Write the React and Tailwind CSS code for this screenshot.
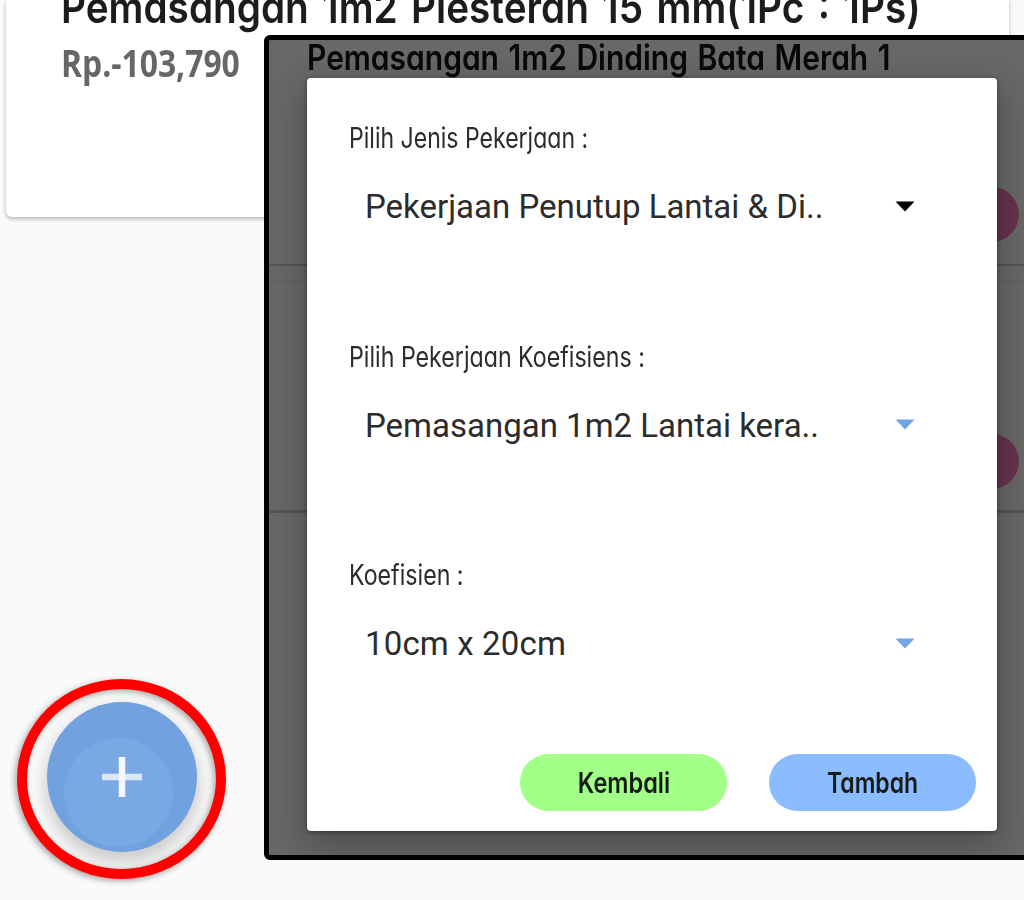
import React from "react";

const rounded = "font-['Inter','Lato',sans-serif] [font-feature-settings:'cv11']";

function Text({ className = "", children }) {
  return (
    <span className={`block w-max origin-left whitespace-nowrap ${className}`}>{children}</span>
  );
}

function Caret({ className }) {
  return (
    <svg className={`-mt-0.5 h-[11px] w-5 ${className}`} viewBox="0 0 20 11" fill="currentColor">
      <path d="M0.5 0.5H19.5L10 10.5Z" />
    </svg>
  );
}

function Field({ label, labelFit, value, valueFit, caret }) {
  return (
    <div className="h-[218.5px]">
      <div className="ml-[42px] flex h-9 items-center">
        <Text className={`${rounded} text-[28px] leading-9 text-[#2c2c2c] ${labelFit}`}>{label}</Text>
      </div>
      <div className="mt-[31px] ml-[58px] flex h-10 w-[550px] items-center justify-between">
        <Text className={`font-['Roboto',sans-serif] text-[33px] leading-10 text-[#2c2c2c] ${valueFit}`}>{value}</Text>
        <Caret className={caret} />
      </div>
    </div>
  );
}

function PillButton({ color, fit, children }) {
  return (
    <button className={`flex h-[57px] w-[207px] items-center justify-center rounded-full ${color}`}>
      <span className={`${rounded} block whitespace-nowrap text-[28px] leading-9 font-semibold text-[#151c18] ${fit}`}>{children}</span>
    </button>
  );
}

function Dialog() {
  return (
    <section className="absolute top-[38px] left-[38px] flex h-[753px] w-[690px] flex-col rounded-[4px] bg-white pt-[42px] shadow-[0_14px_34px_6px_rgba(0,0,0,0.22),0_1px_4px_rgba(0,0,0,0.4)]">
      <Field
        label="Pilih Jenis Pekerjaan :"
        labelFit="scale-x-[0.823]"
        value="Pekerjaan Penutup Lantai & Di.."
        valueFit=""
        caret="text-black"
      />
      <Field
        label="Pilih Pekerjaan Koefisiens :"
        labelFit="scale-x-[0.828]"
        value="Pemasangan 1m2 Lantai kera.."
        valueFit=""
        caret="text-[#72a5e2]"
      />
      <Field
        label="Koefisien :"
        labelFit="scale-x-[0.828]"
        value="10cm x 20cm"
        valueFit="tracking-[0.15px]"
        caret="text-[#72a5e2]"
      />
      <div className="absolute right-[21px] bottom-5 flex gap-[42px]">
        <PillButton color="bg-[#a2ff88]" fit="scale-x-[0.84]">Kembali</PillButton>
        <PillButton color="bg-[#8abcff]" fit="scale-x-[0.82]">Tambah</PillButton>
      </div>
    </section>
  );
}

function DialogScreen() {
  return (
    <div className="absolute top-[35px] left-[264px] h-[825px] w-[780px] overflow-hidden rounded-[6px] border-[5px] border-black bg-[#686868]">
      <div className="h-[227px] border-b-[2px] border-[#575757] pl-[38px]">
        <Text className={`${rounded} -mt-px text-[35px] leading-[36px] font-semibold text-[#080808] [word-spacing:2.3px] scale-x-[0.857]`}>
          Pemasangan 1m2 Dinding Bata Merah 1
        </Text>
      </div>
      <div className="mt-[15px] h-[232px] border-t border-b-[3px] border-t-[#5f5f5f] border-b-[#555]" />
      <div className="absolute top-[147px] left-[695px] size-[55px] rounded-full bg-[#67334d]" />
      <div className="absolute top-[394px] left-[695px] size-[55px] rounded-full bg-[#67334d]" />
      <Dialog />
    </div>
  );
}

function AddButton() {
  return (
    <div className="absolute top-[679px] left-[17px] h-[200px] w-[209px]">
      <button
        aria-label="Tambah"
        className="absolute top-[23px] left-[30px] flex size-[150px] items-center justify-center rounded-full bg-[#71a2df] shadow-[0_8px_16px_3px_rgba(0,0,0,0.18)]"
      >
        <span className="absolute top-[36px] left-[17px] size-[109px] rounded-full bg-[#79a8e4]" />
        <svg className="relative size-10" viewBox="0 0 40 40" stroke="#f4f8fe" strokeWidth="6.5">
          <path d="M20 0V40" />
          <path d="M0 20H40" strokeOpacity="0.8" />
        </svg>
      </button>
      <div className="absolute inset-0 rounded-[50%] border-[10px] border-[#ff0000] drop-shadow-[-2px_2px_3px_rgba(0,0,0,0.35)]" />
    </div>
  );
}

export default function App() {
  return (
    <main className="relative h-[900px] w-full overflow-hidden bg-[#fafafa]">
      <article className="ml-[6px] h-[217px] w-[1003px] rounded-b-[6px] bg-white shadow-[0_2px_4px_rgba(0,0,0,0.28)]">
        <div className="-mt-[19px] inline-block pl-[55px]">
          <Text className={`${rounded} text-[44px] leading-[52px] font-semibold text-[#1c1c1c] [word-spacing:4.2px] scale-x-[0.88]`}>
            Pemasangan 1m2 Plesteran 15 mm(1Pc : 1Ps)
          </Text>
          <Text className="mt-[3px] font-['Open_Sans',sans-serif] text-[38px] leading-[52px] font-bold text-[#666] scale-x-[0.838]">
            Rp.-103,790
          </Text>
        </div>
      </article>
      <DialogScreen />
      <AddButton />
    </main>
  );
}
